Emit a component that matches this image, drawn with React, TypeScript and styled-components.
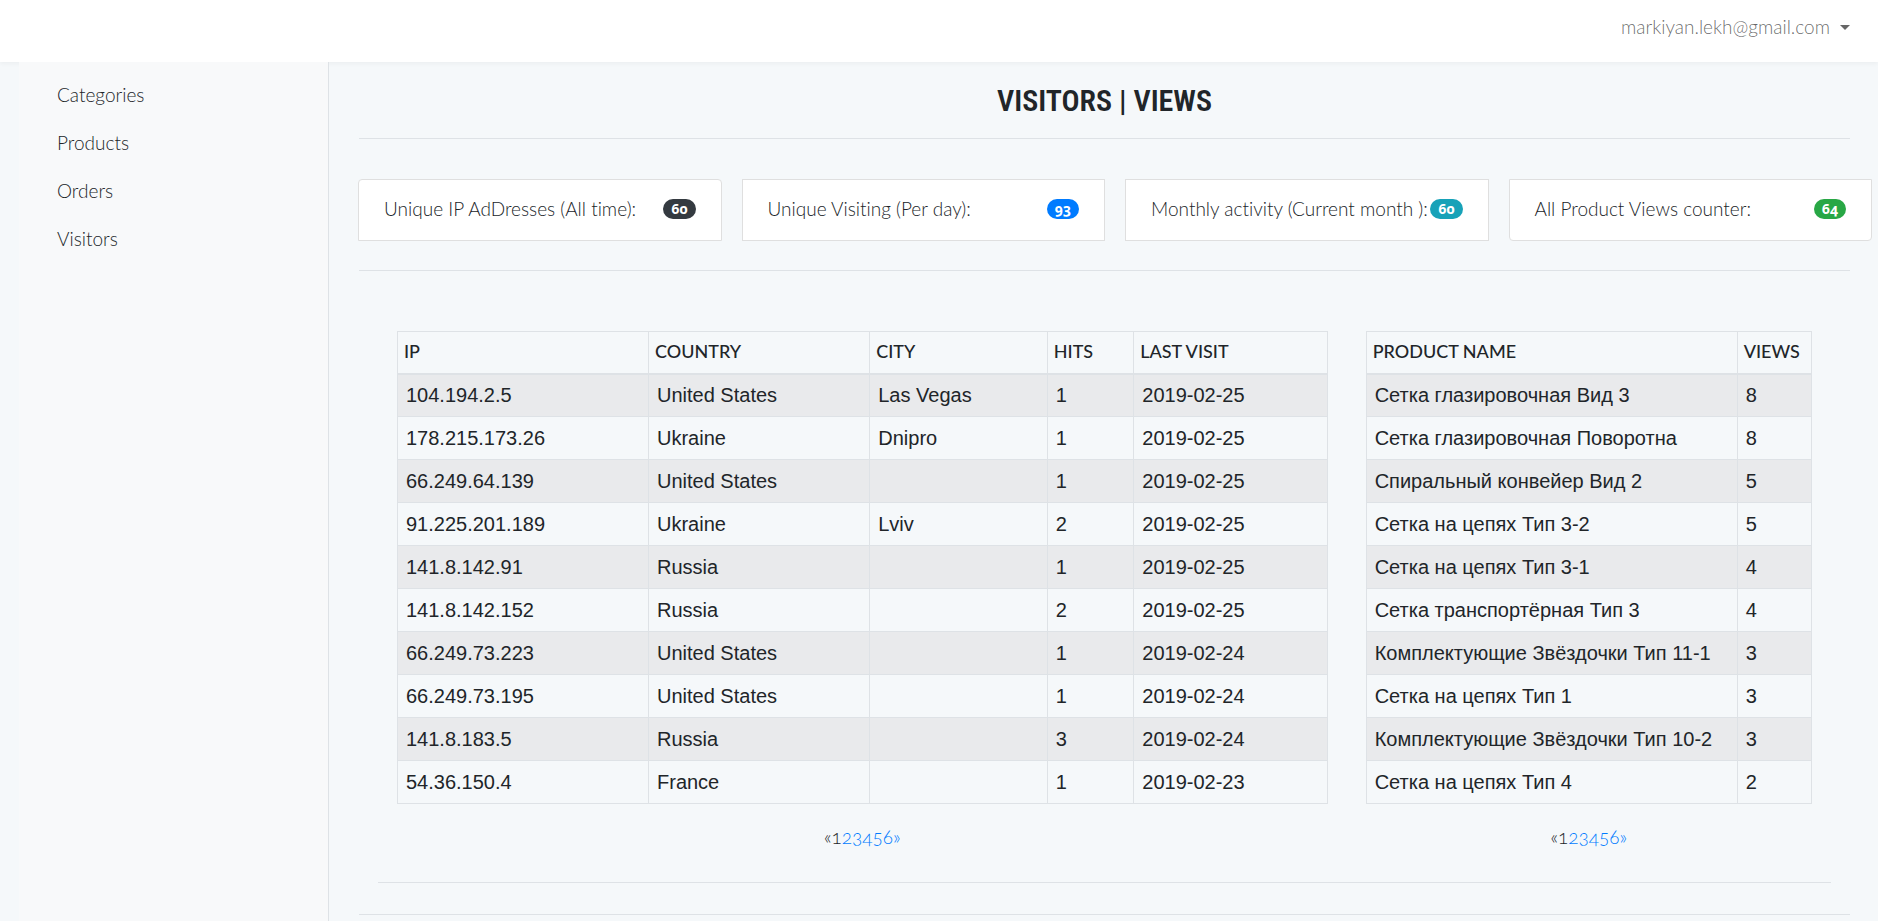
import React from 'react';
import styled, { createGlobalStyle } from 'styled-components';

const brandFont = '"Lato", "Open Sans", sans-serif';
const dataFont = '"Liberation Sans", Arial, sans-serif';
const border = '#dee2e6';

const GlobalStyle = createGlobalStyle`
  *, *::before, *::after { box-sizing: border-box; }
  body {
    margin: 0;
    background: #f5f8fa;
    color: #212529;
    font-family: ${brandFont};
    font-size: 19px;
    font-weight: 300;
    line-height: 28px;
    font-variant-numeric: oldstyle-nums;
    font-variant-ligatures: no-common-ligatures;
  }
`;

const Page = styled.div`
  display: flex;
  flex-direction: column;
  min-height: 100vh;
  overflow-x: hidden;
`;

const Navbar = styled.header`
  display: flex;
  justify-content: flex-end;
  align-items: flex-start;
  height: 62px;
  padding: 13px 28px;
  background: #fff;
  box-shadow: 0 2px 4px rgba(0, 0, 0, 0.04);
`;

const UserMenu = styled.button`
  display: flex;
  align-items: center;
  gap: 10px;
  padding: 0;
  border: 0;
  background: none;
  color: rgba(0, 0, 0, 0.6);
  font: inherit;
  cursor: pointer;

  &::after {
    content: '';
    border-top: 5px solid currentColor;
    border-left: 5px solid transparent;
    border-right: 5px solid transparent;
  }
`;

const Body = styled.div`
  display: flex;
  flex: 1;
`;

const Sidebar = styled.nav`
  position: relative;
  flex: 0 0 310px;
  margin-left: 19px;
  padding: 9px 0;
  background: #f8f9fa;
  border-right: 1px solid ${border};
`;

const NavLink = styled.a`
  display: block;
  padding: 10px 38px;
  color: #212529;
  text-decoration: none;
`;

const Main = styled.main`
  flex: 1;
  min-width: 0;
  padding: 21px 28px 0 30px;
`;

const Title = styled.h1`
  margin: 0 0 19px;
  font-family: "Arial Narrow", "Roboto Condensed", "Roboto", sans-serif;
  font-size: 30px;
  font-weight: 600;
  line-height: 36px;
  text-align: center;
`;

const Rule = styled.hr`
  margin: 0;
  border: 0;
  border-top: 1px solid ${border};
`;

const Cards = styled.ul`
  display: flex;
  align-items: flex-start;
  gap: 20px;
  margin: 40px -22px 29px -1px;
  padding: 0;
  list-style: none;
`;

const Card = styled.li`
  display: flex;
  flex: 1 1 0;
  min-width: 0;
  align-items: center;
  justify-content: space-between;
  padding: 15px 25px 17px;
  background: #fff;
  border: 1px solid #dfdfdf;
  white-space: nowrap;

  &:first-child { border-radius: 4px 4px 0 0; }
  &:last-child { border-radius: 0 0 4px 4px; }
`;

const Badge = styled.span<{ $color: string }>`
  padding: 3px 8px;
  border-radius: 160px;
  background: ${(p) => p.$color};
  color: #fff;
  font-family: "Open Sans", sans-serif;
  font-size: 14px;
  font-weight: 700;
  line-height: 14px;
`;

const Reports = styled.section`
  margin-top: 60px;
  padding: 0 19px;
`;

const ReportGrid = styled.div`
  display: grid;
  grid-template-columns: 2fr 1fr;
`;

const Report = styled.div`
  min-width: 0;
  padding: 0 19px;
`;

const Table = styled.table`
  width: 100%;
  border-collapse: collapse;
  table-layout: fixed;

  th, td {
    border: 1px solid ${border};
    text-align: left;
    white-space: nowrap;
  }
  th {
    height: 42px;
    padding: 0 6px 2px;
    border-bottom-width: 2px;
    font-size: 18px;
    font-weight: 500;
  }
  td {
    height: 43px;
    padding: 0 8px;
    font-family: ${dataFont};
    font-size: 20px;
    font-weight: 400;
  }
  tbody tr:nth-child(odd) { background: #e9eaec; }
`;

const Pagination = styled.nav`
  display: flex;
  justify-content: center;
  padding: 19px 0 31px;

  a { color: #007bff; text-decoration: none; }
`;

const LowerRule = styled(Rule)`
  margin-top: 31px;
`;

const links = ['Categories', 'Products', 'Orders', 'Visitors'];

const stats = [
  { label: 'Unique IP AdDresses (All time):', value: 60, color: '#343a40' },
  { label: 'Unique Visiting (Per day):', value: 93, color: '#007bff' },
  { label: 'Monthly activity (Current month ):', value: 60, color: '#17a2b8' },
  { label: 'All Product Views counter:', value: 64, color: '#28a745' },
];

const visitorColumns = [
  { title: 'IP', width: '27%' },
  { title: 'COUNTRY', width: '23.8%' },
  { title: 'CITY', width: '19.1%' },
  { title: 'HITS', width: '9.3%' },
  { title: 'LAST VISIT', width: '20.8%' },
];

const visitors = [
  ['104.194.2.5', 'United States', 'Las Vegas', 1, '2019-02-25'],
  ['178.215.173.26', 'Ukraine', 'Dnipro', 1, '2019-02-25'],
  ['66.249.64.139', 'United States', '', 1, '2019-02-25'],
  ['91.225.201.189', 'Ukraine', 'Lviv', 2, '2019-02-25'],
  ['141.8.142.91', 'Russia', '', 1, '2019-02-25'],
  ['141.8.142.152', 'Russia', '', 2, '2019-02-25'],
  ['66.249.73.223', 'United States', '', 1, '2019-02-24'],
  ['66.249.73.195', 'United States', '', 1, '2019-02-24'],
  ['141.8.183.5', 'Russia', '', 3, '2019-02-24'],
  ['54.36.150.4', 'France', '', 1, '2019-02-23'],
];

const productColumns = [
  { title: 'PRODUCT NAME', width: '83.3%' },
  { title: 'VIEWS', width: '16.7%' },
];

const products = [
  ['Сетка глазировочная Вид 3', 8],
  ['Сетка глазировочная Поворотна', 8],
  ['Спиральный конвейер Вид 2', 5],
  ['Сетка на цепях Тип 3-2', 5],
  ['Сетка на цепях Тип 3-1', 4],
  ['Сетка транспортёрная Тип 3', 4],
  ['Комплектующие Звёздочки Тип 11-1', 3],
  ['Сетка на цепях Тип 1', 3],
  ['Комплектующие Звёздочки Тип 10-2', 3],
  ['Сетка на цепях Тип 4', 2],
];

type DataTableProps = {
  columns: { title: string; width: string }[];
  rows: (string | number)[][];
};

function DataTable({ columns, rows }: DataTableProps) {
  return (
    <Table>
      <colgroup>
        {columns.map((c) => <col key={c.title} width={c.width} />)}
      </colgroup>
      <thead>
        <tr>{columns.map((c) => <th key={c.title} scope="col">{c.title}</th>)}</tr>
      </thead>
      <tbody>
        {rows.map((row) => (
          <tr key={row[0]}>{row.map((cell, i) => <td key={i}>{cell}</td>)}</tr>
        ))}
      </tbody>
    </Table>
  );
}

function Pager({ label }: { label: string }) {
  return (
    <Pagination aria-label={label}>
      <span>«</span>
      <span aria-current="page">1</span>
      {[2, 3, 4, 5, 6].map((n) => <a key={n} href={`#page-${n}`}>{n}</a>)}
      <a href="#page-2">»</a>
    </Pagination>
  );
}

export default function App() {
  return (
    <Page>
      <GlobalStyle />
      <Navbar>
        <UserMenu type="button" aria-haspopup="menu">markiyan.lekh@gmail.com</UserMenu>
      </Navbar>
      <Body>
        <Sidebar>
          {links.map((l) => <NavLink key={l} href={`#${l.toLowerCase()}`}>{l}</NavLink>)}
        </Sidebar>
        <Main>
          <Title>VISITORS | VIEWS</Title>
          <Rule />
          <Cards>
            {stats.map((s) => (
              <Card key={s.label}>
                {s.label}
                <Badge $color={s.color}>{s.value}</Badge>
              </Card>
            ))}
          </Cards>
          <Rule />
          <Reports>
            <ReportGrid>
              <Report>
                <DataTable columns={visitorColumns} rows={visitors} />
                <Pager label="Visitors pages" />
              </Report>
              <Report>
                <DataTable columns={productColumns} rows={products} />
                <Pager label="Products pages" />
              </Report>
            </ReportGrid>
            <Rule />
          </Reports>
          <LowerRule />
        </Main>
      </Body>
    </Page>
  );
}
